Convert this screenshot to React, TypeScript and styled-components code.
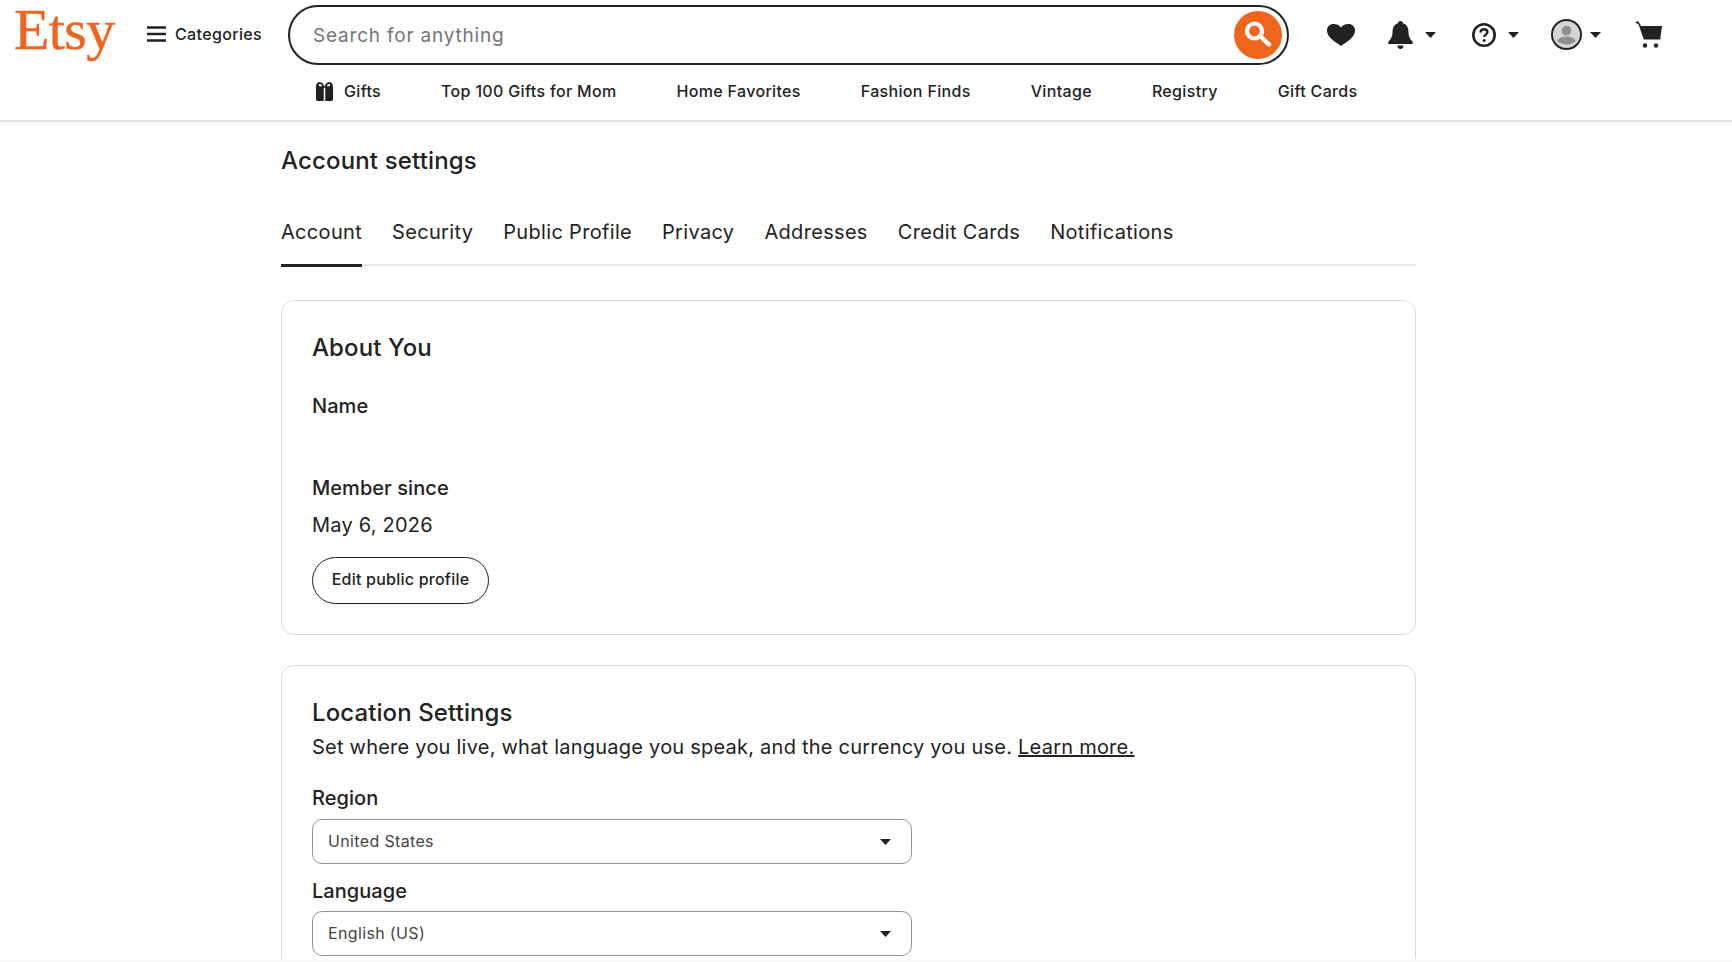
import React from "react";
import styled, { createGlobalStyle } from "styled-components";

const Global = createGlobalStyle`
  html, body { margin: 0; padding: 0; background: #fff; overflow: hidden; }
  body { font-family: Inter, "Liberation Sans", sans-serif; color: #222; }
  * { box-sizing: border-box; }
`;
const Page = styled.div`height: 962px; overflow: hidden; position: relative; background: #fff;`;
const Header = styled.header`height: 122px; border-bottom: 2px solid #e1e1e1; display: flex; flex-direction: column;`;
const TopRow = styled.div`display: flex; align-items: flex-start; padding: 5px 0 0 14px; height: 65px;`;
const Logo = styled.a`font-family: "Liberation Serif", serif; font-size: 58px; line-height: 58px; margin-top: -4px; color: #f1641e; width: 133px; letter-spacing: -0.6px; -webkit-text-stroke: .4px #f1641e;`;
const CategoriesBtn = styled.div`display: flex; align-items: center; gap: 9px; font-size: 16px; letter-spacing: .35px; font-weight: 500; width: 141px; height: 58px;`;
const Search = styled.div`width: 1001px; height: 60px; border: 2px solid #222; border-radius: 30px; display: flex; align-items: center; justify-content: space-between; padding: 0 5px 0 23px;`;
const Placeholder = styled.span`font-size: 19px; letter-spacing: .8px; color: #757575;`;
const SearchBtn = styled.div`width: 48px; height: 48px; border-radius: 50%; background: #f1641e; display: flex;`;
const Icons = styled.div`display: flex; align-items: center; height: 59px; margin-left: 38px;`;
const IconSlot = styled.div<{ $w: number; $gap?: number }>`width: ${p => p.$w}px; display: flex; align-items: center; gap: ${p => p.$gap ?? 0}px;`;
const Caret = () => <svg width="11" height="6" viewBox="0 0 11 6"><path d="M0 0h11L5.500 6z" fill="#222" /></svg>;
const Nav = styled.nav`display: flex; align-items: flex-start; gap: 60px; padding: 14px 0 0 315px; height: 55px; font-size: 16px; letter-spacing: .33px; font-weight: 500;`;
const NavItem = styled.a`display: flex; align-items: center; gap: 10px; white-space: nowrap; height: 24px;`;
const Main = styled.main`width: 1135px; margin-left: 281px;`;
const Title = styled.h1`font-size: 24px; letter-spacing: .15px; font-weight: 500; margin: 0; line-height: 32px; padding-top: 23px;`;
const Tabs = styled.div`display: flex; gap: 30px; margin-top: 34px; height: 55px; border-bottom: 2px solid #e8e8e8;`;
const Tab = styled.a<{ $active?: boolean }>`font-size: 20px; letter-spacing: .32px; line-height: 42px; height: 56px; white-space: nowrap; border-bottom: 3px solid ${p => (p.$active ? "#222" : "transparent")};`;
const Card = styled.section<{ $top: number; $bottom: number }>`border: 1px solid #d9d9d9; border-radius: 13px; padding: 0 30px ${p => p.$bottom}px; margin-top: ${p => p.$top}px;`;
const Heading = styled.h2<{ $top: number }>`font-size: 24px; letter-spacing: .1px; font-weight: 500; margin: 0; line-height: 32px; padding-top: ${p => p.$top}px;`;
const Label = styled.div<{ $top: number }>`font-size: 20px; letter-spacing: .05px; font-weight: 500; line-height: 28px; margin-top: ${p => p.$top}px;`;
const Body = styled.div<{ $top: number }>`font-size: 20px; letter-spacing: .23px; line-height: 28px; margin-top: ${p => p.$top}px;`;
const OutlineBtn = styled.button`display: block; font: 500 16px Inter, sans-serif; letter-spacing: .23px; color: #222; height: 47px; width: 177px; margin-top: 18px; background: #fff; border: 1px solid #222; border-radius: 24px; padding: 0 0 3px;`;
const Select = styled.div<{ $top: number }>`width: 600px; height: 45px; margin-top: ${p => p.$top}px; border: 1px solid #949494; border-radius: 10px; display: flex; align-items: center; justify-content: space-between; padding: 0 20px 0 15px; font-size: 16px; letter-spacing: .35px; color: #444;`;
const SelectValue = styled.span`padding-bottom: 2px;`;
const Link = styled.a`text-decoration: underline;`;
const Strip = styled.div`position: absolute; left: 0; right: 0; bottom: 0; height: 3px; background: #fafafa;`;

const navItems = ["Top 100 Gifts for Mom", "Home Favorites", "Fashion Finds", "Vintage", "Registry", "Gift Cards"];
const tabs = ["Account", "Security", "Public Profile", "Privacy", "Addresses", "Credit Cards", "Notifications"];

export default function App() {
  return (
    <Page>
      <Global />
      <Header>
        <TopRow>
          <Logo>Etsy</Logo>
          <CategoriesBtn>
            <svg width="19" height="16" viewBox="0 0 19 16"><path d="M0 1.500h19M0 8h19M0 14.500h19" stroke="#222" strokeWidth="2.400" /></svg>
            Categories
          </CategoriesBtn>
          <Search>
            <Placeholder>Search for anything</Placeholder>
            <SearchBtn>
              <svg width="48" height="48" viewBox="0 0 48 48" fill="none" stroke="#fff"><circle cx="20.500" cy="20" r="7.500" strokeWidth="4.200" /><path d="M27 26l8 7.500" strokeWidth="4.400" strokeLinecap="round" /></svg>
            </SearchBtn>
          </Search>
          <Icons>
            <IconSlot $w={61}>
              <svg width="28" height="22" viewBox="0 0 28 22"><path d="M14 22C8 17.500 0 13.500 0 6.500 0 2.500 3 0 6.500 0 9.500 0 12.500 1.200 14 3.400 15.500 1.200 18.500 0 21.500 0 25 0 28 2.500 28 6.500 28 13.500 20 17.500 14 22z" fill="#222" /></svg>
            </IconSlot>
            <IconSlot $w={84} $gap={12}>
              <svg width="25" height="28" viewBox="0 0 25 28"><path d="M12.500 0c1.500 0 2.500 1 2.700 2.400C19.500 3.500 20.500 7.500 20.500 11.500c0 4.500 1.800 6.800 3.900 9 .9 1 .6 2.500-1 2.500H1.600c-1.600 0-1.900-1.500-1-2.500 2.100-2.200 3.900-4.500 3.900-9 0-4 1-8 5.300-9.100C10 1 11 0 12.500 0zM9.500 24.500h6c0 2-1.200 3.500-3 3.500s-3-1.500-3-3.500z" fill="#222" /></svg>
              <Caret />
            </IconSlot>
            <IconSlot $w={79} $gap={12}>
              <svg width="24" height="24" viewBox="0 0 24 24" fill="none"><circle cx="12" cy="12" r="10.700" stroke="#222" strokeWidth="2.600" /><path d="M8.600 9.500c0-2 1.500-3.300 3.400-3.300s3.400 1.100 3.400 2.900c0 2.500-3.200 2.500-3.200 5" stroke="#222" strokeWidth="2.400" /><circle cx="12.200" cy="17.400" r="1.500" fill="#222" /></svg>
              <Caret />
            </IconSlot>
            <IconSlot $w={84} $gap={8}>
              <svg width="31" height="31" viewBox="0 0 32 32"><circle cx="16" cy="16" r="15" fill="#d5d5d5" stroke="#222" strokeWidth="2" /><circle cx="16" cy="12" r="5" fill="#8f8f8f" /><path d="M6.500 23c1-3.500 5-5 9.500-5s8.500 1.500 9.500 5c-2.500 2-6 3.200-9.500 3.200S9 25 6.500 23z" fill="#8f8f8f" /></svg>
              <Caret />
            </IconSlot>
            <IconSlot $w={28}>
              <svg width="27" height="27" viewBox="0 0 27 27"><path d="M0 1.500L3.200 0 6 5h21l-1.800 13.500H8.800L3.500 3.200z" fill="#222" /><circle cx="10" cy="24.500" r="2.200" fill="#222" /><circle cx="21" cy="24.500" r="2.200" fill="#222" /></svg>
            </IconSlot>
          </Icons>
        </TopRow>
        <Nav>
          <NavItem>
            <svg width="19" height="19" viewBox="0 0 20 20"><path d="M1 6h8.200v14H3a2 2 0 0 1-2-2zM10.800 6H19v12a2 2 0 0 1-2 2h-6.200zM1 6c0-3 1-6 4-6 2.500 0 4 2.500 5 5 1-2.500 2.500-5 5-5 3 0 4 3 4 6z" fill="#222" /><path d="M5 2.200C3.800 2.200 3.600 4 5 4.500h2.700C7 3 6 2.200 5 2.200zM15 2.200c1.200 0 1.400 1.800 0 2.300h-2.700C13 3 14 2.200 15 2.200z" fill="#fff" /></svg>
            Gifts
          </NavItem>
          {navItems.map(n => <NavItem key={n}>{n}</NavItem>)}
        </Nav>
      </Header>
      <Main>
        <Title>Account settings</Title>
        <Tabs>{tabs.map((t, i) => <Tab key={t} $active={i === 0}>{t}</Tab>)}</Tabs>
        <Card $top={34} $bottom={30}>
          <Heading $top={31}>About You</Heading>
          <Label $top={28}>Name</Label>
          <Label $top={54}>Member since</Label>
          <Body $top={9}>May 6, 2026</Body>
          <OutlineBtn>Edit public profile</OutlineBtn>
        </Card>
        <Card $top={30} $bottom={120}>
          <Heading $top={31}>Location Settings</Heading>
          <Body $top={4}>Set where you live, what language you speak, and the currency you use. <Link>Learn more.</Link></Body>
          <Label $top={23}>Region</Label>
          <Select $top={7}><SelectValue>United States</SelectValue><Caret /></Select>
          <Label $top={13}>Language</Label>
          <Select $top={6}><SelectValue>English (US)</SelectValue><Caret /></Select>
        </Card>
      </Main>
      <Strip />
    </Page>
  );
}
